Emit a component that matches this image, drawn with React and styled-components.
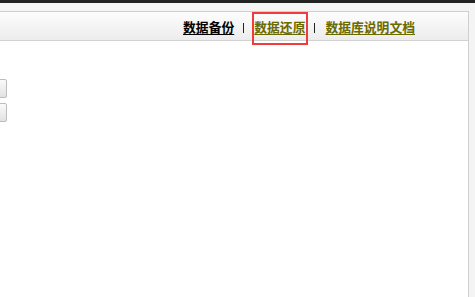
import React from "react";
import styled, { createGlobalStyle } from "styled-components";

const GlobalStyle = createGlobalStyle`
  html, body {
    margin: 0;
    padding: 0;
    background: #f4f4f4;
    overflow: hidden;
  }
  body {
    font-family: "Noto Sans CJK SC", "Liberation Sans", sans-serif;
  }
`;

const TopBar = styled.div`
  height: 3px;
  background: #222;
`;

const Page = styled.div`
  padding-top: 8px;
  display: flex;
`;

const Panel = styled.div`
  margin-left: -2px;
  width: 471px;
  height: 300px;
  background: #fff;
  border: 1px solid #cfcfcf;
  box-sizing: border-box;
  display: flex;
  flex-direction: column;
`;

const Header = styled.div`
  height: 29px;
  box-sizing: border-box;
  border-bottom: 1px solid #d2d2d2;
  background: linear-gradient(#fdfdfd, #ececec);
  display: flex;
  align-items: center;
  justify-content: flex-end;
  padding-right: 53px;
`;

const Link = styled.a`
  position: relative;
  font-size: 12.8px;
  line-height: 15px;
  font-weight: bold;
  color: ${(p) => (p.$olive ? "#6b6a00" : "#000")};
  text-decoration: underline;
  text-underline-offset: 2px;
  cursor: pointer;
`;

const Mark = styled.span`
  position: absolute;
  left: -2px;
  right: -3px;
  top: -7px;
  height: 33px;
  border: 2px solid #f03c3c;
  box-sizing: border-box;
  pointer-events: none;
`;

const Sep = styled.span`
  width: 1px;
  height: 10px;
  background: #222;
  margin: 3px 10px 0 9px;
`;

const Body = styled.div`
  padding-top: 38px;
  display: flex;
  flex-direction: column;
  gap: 5px;
  margin-left: -60px;
`;

const Button = styled.button`
  width: 68px;
  height: 19px;
  border: 1px solid #bdbdbd;
  border-radius: 2px;
  background: linear-gradient(#fafafa, #e2e2e2);
  padding: 0;
`;

export default function App() {
  return (
    <>
      <GlobalStyle />
      <TopBar />
      <Page>
        <Panel>
          <Header>
            <Link>数据备份</Link>
            <Sep />
            <Link $olive>
              数据还原
              <Mark />
            </Link>
            <Sep />
            <Link $olive>数据库说明文档</Link>
          </Header>
          <Body>
            <Button />
            <Button />
          </Body>
        </Panel>
      </Page>
    </>
  );
}
